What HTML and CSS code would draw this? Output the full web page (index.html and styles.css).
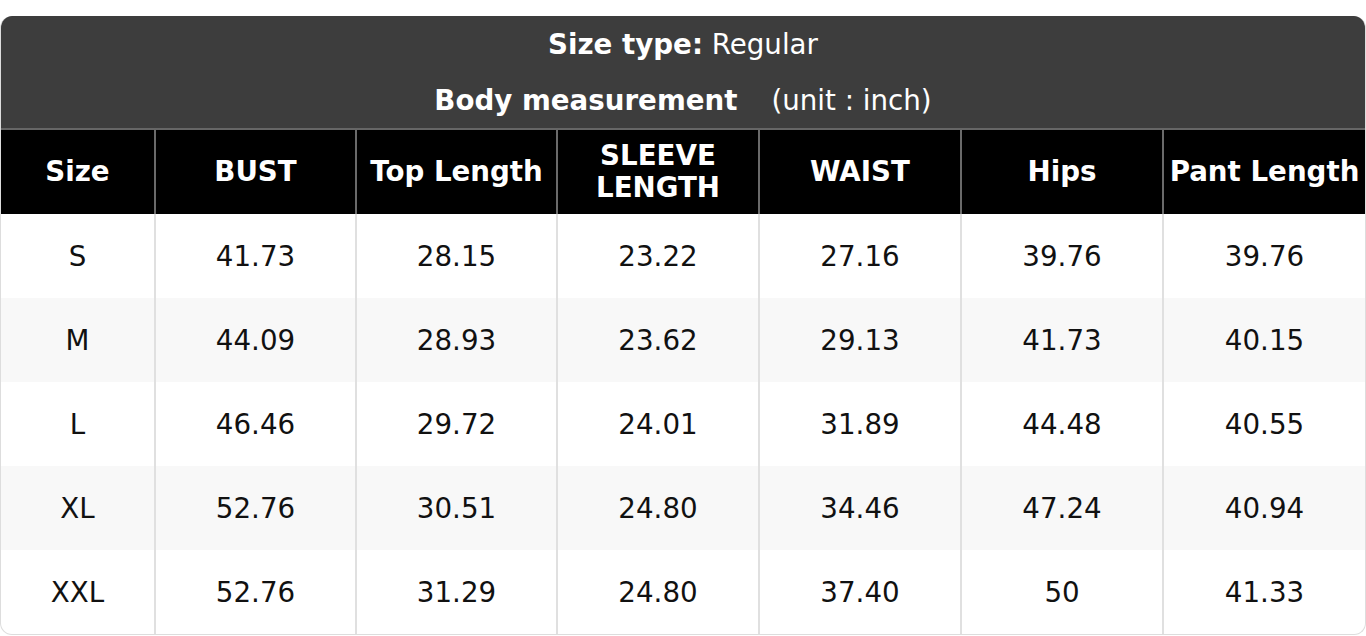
FILE: index.html
```html
<!DOCTYPE html>
<html lang="en">
<head>
<meta charset="utf-8">
<title>Size chart</title>
<link rel="stylesheet" href="styles.css">
</head>
<body>
<div class="chart">
  <div class="title">
    <div class="title-line"><span><b>Size type:</b> Regular</span></div>
    <div class="title-line"><span><b>Body measurement</b><span class="unit">(unit : inch)</span></span></div>
  </div>
  <div class="grid">
    <div class="hcell">Size</div>
    <div class="hcell">BUST</div>
    <div class="hcell">Top Length</div>
    <div class="hcell">SLEEVE<br>LENGTH</div>
    <div class="hcell">WAIST</div>
    <div class="hcell">Hips</div>
    <div class="hcell">Pant Length</div>

    <div class="cell">S</div><div class="cell">41.73</div><div class="cell">28.15</div><div class="cell">23.22</div><div class="cell">27.16</div><div class="cell">39.76</div><div class="cell">39.76</div>
    <div class="cell alt">M</div><div class="cell alt">44.09</div><div class="cell alt">28.93</div><div class="cell alt">23.62</div><div class="cell alt">29.13</div><div class="cell alt">41.73</div><div class="cell alt">40.15</div>
    <div class="cell">L</div><div class="cell">46.46</div><div class="cell">29.72</div><div class="cell">24.01</div><div class="cell">31.89</div><div class="cell">44.48</div><div class="cell">40.55</div>
    <div class="cell alt">XL</div><div class="cell alt">52.76</div><div class="cell alt">30.51</div><div class="cell alt">24.80</div><div class="cell alt">34.46</div><div class="cell alt">47.24</div><div class="cell alt">40.94</div>
    <div class="cell">XXL</div><div class="cell">52.76</div><div class="cell">31.29</div><div class="cell">24.80</div><div class="cell">37.40</div><div class="cell">50</div><div class="cell">41.33</div>
  </div>
</div>
</body>
</html>
```
FILE: styles.css
```css
html, body {
  margin: 0;
  padding: 0;
  background: #ffffff;
}
body {
  padding-top: 16px;
  font-family: "DejaVu Sans", sans-serif;
  font-size: 27.7px;
  color: #111111;
}
.chart {
  width: 1366px;
  box-sizing: border-box;
  border: 1px solid #dddddd;
  border-top: none;
  border-radius: 12px;
  overflow: hidden;
}
.title {
  background: #3d3d3d;
  color: #ffffff;
  border-bottom: 2px solid #666666;
}
.title-line {
  height: 56px;
  display: flex;
  align-items: center;
  justify-content: center;
}
.unit {
  margin-left: 34px;
}
.grid {
  display: grid;
  grid-template-columns: 153px 201px 201px 202px 202px 202px 1fr;
}
.hcell {
  height: 84px;
  background: #000000;
  color: #ffffff;
  font-weight: bold;
  line-height: 32px;
  display: flex;
  align-items: center;
  justify-content: center;
  text-align: center;
  border-left: 2px solid #6a6a6a;
}
.cell {
  height: 84px;
  display: flex;
  align-items: center;
  justify-content: center;
  border-left: 2px solid #e0e0e0;
}
.hcell:first-child,
.cell:nth-child(7n+1) {
  border-left: none;
}
.alt {
  background: #f8f8f8;
}
```
